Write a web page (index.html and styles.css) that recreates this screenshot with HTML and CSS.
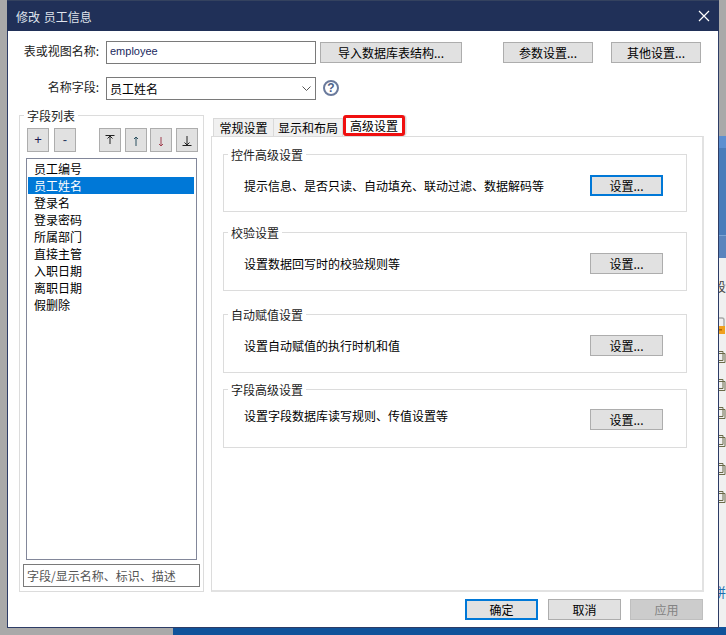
FILE: index.html
```html
<!DOCTYPE html>
<html lang="zh-CN">
<head>
<meta charset="utf-8">
<title>修改 员工信息</title>
<link rel="stylesheet" href="styles.css">
</head>
<body>
<div class="desk-bottom"></div>
<aside class="desk-right">
  <div class="desk-gray"></div>
  <div class="desk-blue"><div class="desk-blue-top"></div><div class="desk-blue-mid"></div><div class="desk-blue-low"></div></div>
  <div class="desk-list">
    <div class="clip-text">段</div>
    <svg class="lock" width="7" height="20" viewBox="0 0 7 20"><path d="M0 1h3a2 2 0 0 1 2 2v6" fill="none" stroke="#a8a8a8" stroke-width="1.4"/><rect x="0" y="9" width="6" height="8" fill="#f0a020"/><rect x="0" y="12" width="3" height="1.5" fill="#b06a00"/></svg>
    <svg class="doc" width="7" height="12" viewBox="0 0 7 12"><path d="M0 .5h4v2h2v9H0M0 2.500h4v7H0" fill="none" stroke="#6b6b4a"/></svg>
    <svg class="doc" width="7" height="12" viewBox="0 0 7 12"><path d="M0 .5h4v2h2v9H0M0 2.500h4v7H0" fill="none" stroke="#6b6b4a"/></svg>
    <svg class="doc" width="7" height="12" viewBox="0 0 7 12"><path d="M0 .5h4v2h2v9H0M0 2.500h4v7H0" fill="none" stroke="#6b6b4a"/></svg>
    <svg class="doc" width="7" height="12" viewBox="0 0 7 12"><path d="M0 .5h4v2h2v9H0M0 2.500h4v7H0" fill="none" stroke="#6b6b4a"/></svg>
    <svg class="doc" width="7" height="12" viewBox="0 0 7 12"><path d="M0 .5h4v2h2v9H0M0 2.500h4v7H0" fill="none" stroke="#6b6b4a"/></svg>
    <svg class="doc" width="7" height="12" viewBox="0 0 7 12"><path d="M0 .5h4v2h2v9H0M0 2.500h4v7H0" fill="none" stroke="#6b6b4a"/></svg>
    <div class="clip-text clip-blue">拼</div>
  </div>
</aside>

<main class="window">
  <header class="titlebar">
    <span class="title">修改 员工信息</span>
    <svg class="close" width="12" height="12" viewBox="0 0 12 12"><path d="M1 1l10 10M11 1L1 11" stroke="#fff" stroke-width="1.2" fill="none"/></svg>
  </header>

  <div class="form-row row-one">
    <label class="form-label">表或视图名称:</label>
    <input class="field" type="text" value="employee">
    <button class="btn btn-import">导入数据库表结构...</button>
    <button class="btn btn-param">参数设置...</button>
    <button class="btn btn-other">其他设置...</button>
  </div>

  <div class="form-row row-two">
    <label class="form-label">名称字段:</label>
    <div class="select">
      <span>员工姓名</span>
      <svg width="9" height="6" viewBox="0 0 9 6"><path d="M.5.500l4 4 4-4" fill="none" stroke="#555"/></svg>
    </div>
    <span class="help">?</span>
  </div>

  <div class="columns">
    <section class="field-group">
      <div class="legend">字段列表</div>
      <div class="toolbar">
        <button class="tool tool-plus">+</button>
        <button class="tool tool-minus">-</button>
        <div class="tool-spacer"></div>
        <div class="tool-pair">
          <button class="tool"><svg width="12" height="12" viewBox="0 0 12 12"><path d="M1.500 1.500h9M6 2v8M3.500 4.500L6 2l2.500 2.500" fill="none" stroke="#222"/></svg></button>
          <button class="tool"><svg width="12" height="12" viewBox="0 0 12 12"><path d="M6 3v9M4 5l2-2 2 2" fill="none" stroke="#2a5060"/></svg></button>
        </div>
        <div class="tool-pair">
          <button class="tool"><svg width="12" height="12" viewBox="0 0 12 12"><path d="M6 3v9M4 10l2 2 2-2" fill="none" stroke="#a04050"/></svg></button>
          <button class="tool"><svg width="12" height="12" viewBox="0 0 12 12"><path d="M1.500 11.500h9M6 2v9M3.500 8.500L6 11l2.500-2.500" fill="none" stroke="#222"/></svg></button>
        </div>
      </div>
      <ul class="field-list">
        <li>员工编号</li>
        <li class="selected">员工姓名</li>
        <li>登录名</li>
        <li>登录密码</li>
        <li>所属部门</li>
        <li>直接主管</li>
        <li>入职日期</li>
        <li>离职日期</li>
        <li>假删除</li>
      </ul>
      <input class="search" type="text" placeholder="字段/显示名称、标识、描述">
    </section>

    <section class="tabs">
      <nav class="tab-strip">
        <div class="tab tab-first">常规设置</div>
        <div class="tab">显示和布局</div>
        <div class="tab tab-active">高级设置</div>
      </nav>
      <div class="panel">
        <div class="option opt-a">
          <div class="legend">控件高级设置</div>
          <div class="option-row"><span>提示信息、是否只读、自动填充、联动过滤、数据解码等</span><button class="btn btn-set btn-focus">设置...</button></div>
        </div>
        <div class="option opt-b">
          <div class="legend">校验设置</div>
          <div class="option-row"><span>设置数据回写时的校验规则等</span><button class="btn btn-set">设置...</button></div>
        </div>
        <div class="option opt-c">
          <div class="legend">自动赋值设置</div>
          <div class="option-row"><span>设置自动赋值的执行时机和值</span><button class="btn btn-set">设置...</button></div>
        </div>
        <div class="option opt-d">
          <div class="legend">字段高级设置</div>
          <div class="option-row row-last"><span class="raised">设置字段数据库读写规则、传值设置等</span><button class="btn btn-set">设置...</button></div>
        </div>
      </div>
    </section>
  </div>

  <footer class="footer">
    <button class="btn btn-foot btn-focus">确定</button>
    <button class="btn btn-foot">取消</button>
    <button class="btn btn-foot btn-disabled">应用</button>
  </footer>
</main>
</body>
</html>
```

FILE: styles.css
```css
* { box-sizing: border-box; }
html, body { margin: 0; padding: 0; overflow: hidden; }
body {
  position: relative;
  width: 726px;
  height: 635px;
  background: #a9a9a9;
  font-family: "Noto Sans CJK SC", "Liberation Sans", sans-serif;
  font-size: 12px;
  line-height: 17px;
  color: #000;
}
ul { list-style: none; margin: 0; padding: 0; }

/* desktop behind the dialog */
.desk-bottom {
  position: absolute;
  left: 173px; top: 627px;
  width: 553px; height: 8px;
  background: #10529a;
}
.desk-right {
  position: absolute;
  left: 719px; top: 0;
  width: 7px; height: 627px;
  display: flex;
  flex-direction: column;
  overflow: hidden;
}
.desk-gray { height: 136px; flex: none; }
.desk-blue { height: 122px; flex: none; display: flex; flex-direction: column; }
.desk-blue-top { height: 12px; background: #5d8fd0; }
.desk-blue-mid { height: 88px; background: #4a7cba; border-bottom: 1px solid #7ba3d3; }
.desk-blue-low { height: 22px; background: #5a84bd; }
.desk-list {
  flex: 1;
  background: #f0f0f0;
  display: flex;
  flex-direction: column;
  align-items: flex-start;
}
.clip-text {
  margin-left: -6px;
  margin-top: 19px;
  width: 13px;
  font-size: 13px;
  line-height: 18px;
  color: #444;
}
.clip-blue { margin-top: 80px; color: #1c6fb0; }
.lock { margin-top: 22px; }
.doc { margin-top: 16px; }
.lock + .doc { margin-top: 14px; }

/* dialog */
.window {
  position: absolute;
  left: 7px; top: 0;
  width: 712px; height: 628px;
  background: #fff;
  border: 1px solid #2d3c66;
  border-top: 1px solid #34425f;
}
.titlebar {
  height: 30px;
  background: #203058;
  display: flex;
  align-items: center;
  justify-content: space-between;
  padding: 0 9px;
  margin: 0 -1px;
}
.title { color: #dfe3ec; word-spacing: 1px; }

.form-row { display: flex; align-items: flex-start; }
.row-one { margin-top: 10px; height: 23px; }
.row-two { margin-top: 13px; height: 23px; }
.form-label {
  width: 91px;
  margin-right: 7px;
  text-align: right;
  line-height: 20px;
  color: #222;
}
.field {
  width: 210px;
  height: 23px;
  border: 1px solid #7a7a7a;
  padding: 0 3px 3px;
  font-family: "Liberation Sans", sans-serif;
  font-size: 11px;
  color: #1a2a60;
  background: #fff;
  outline: none;
}
.btn {
  height: 21px;
  margin-top: 1px;
  padding: 0;
  border: 1px solid #adadad;
  background: #e1e1e1;
  font: inherit;
  line-height: 17px;
  color: #000;
}
.btn-import { width: 142px; margin-left: 4px; }
.btn-param { width: 90px; margin-left: 41px; }
.btn-other { width: 90px; margin-left: 18px; }
.btn-focus { border: 2px solid #0078d7; }

.select {
  width: 210px;
  height: 23px;
  border: 1px solid #7a7a7a;
  display: flex;
  align-items: center;
  justify-content: space-between;
  padding: 0 4px 0 3px;
}
.help {
  width: 16px;
  height: 16px;
  margin: 3px 0 0 7px;
  border: 2px solid #6a7a9c;
  border-radius: 50%;
  color: #4d6088;
  font-family: "Liberation Sans", sans-serif;
  font-size: 12px;
  font-weight: bold;
  line-height: 12px;
  text-align: center;
}

.columns { display: flex; align-items: flex-start; margin-top: 15px; padding-left: 11px; }

.legend {
  display: table;
  margin-top: -9px;
  margin-left: 4px;
  padding: 0 3px;
  background: #fff;
  color: #222;
}

/* left column */
.field-group {
  width: 185px;
  height: 477px;
  border: 1px solid #dcdcdc;
}
.toolbar { display: flex; gap: 3px; margin: 4px 0 0 7px; }
.tool-pair { display: flex; gap: 4px; }
.tool {
  width: 22px;
  height: 24px;
  padding: 0;
  border: 1px solid #adadad;
  background: #e1e1e1;
  display: flex;
  align-items: center;
  justify-content: center;
  font: inherit;
  font-family: "Liberation Sans", sans-serif;
  font-size: 13px;
  line-height: 20px;
}
.tool-plus { color: #1a1a50; margin-right: 2px; }
.tool-minus { color: #2a3a60; }
.tool-spacer { width: 17px; }
.field-list {
  width: 171px;
  height: 402px;
  margin: 6px 0 0 6px;
  padding: 1px 2px 0 1px;
  border: 1px solid #82879a;
}
.field-list li { height: 17px; padding-left: 6px; }
.field-list .selected { background: #0078d7; color: #fff; }
.search {
  display: block;
  width: 177px;
  height: 23px;
  margin: 4px 0 0 3px;
  padding: 0 3px 1px;
  border: 1px solid #7a7a7a;
  font: inherit;
  outline: none;
}
.search::placeholder { color: #555; opacity: 1; }

/* right column */
.tabs { width: 493px; margin-left: 7px; }
.tab-strip { height: 21px; display: flex; align-items: flex-end; padding-left: 2px; }
.tab {
  height: 18px;
  width: 70px;
  border: 1px solid #d9d9d9;
  border-bottom: 0;
  background: #f0f0f0;
  text-align: center;
  line-height: 18px;
}
.tab-first { width: 60px; border-right: 0; }
.tab-active {
  width: 62px;
  height: 21px;
  background: #fff;
  border: 3px solid #f01010;
  border-radius: 3px;
  line-height: 16px;
  box-shadow: 1.500px 0 0 #d9d9d9;
}
.panel {
  height: 456px;
  border: 1px solid #dcdcdc;
  border-right: 2px solid #e2e2e2;
  border-bottom: 2px solid #e2e2e2;
  padding: 17px 0 0 11px;
}
.option { width: 464px; border: 1px solid #dcdcdc; }
.opt-a { height: 58px; }
.opt-b { height: 59px; margin-top: 20px; }
.opt-c { height: 59px; margin-top: 23px; }
.opt-d { height: 59px; margin-top: 16px; }
.option .legend { margin-top: -9px; margin-left: 4px; }
.option-row {
  display: flex;
  align-items: center;
  justify-content: space-between;
  margin-top: 12px;
  padding: 0 23px 0 20px;
}
.row-last { margin-top: 11px; }
.raised { margin-top: -9px; }
.btn-set { width: 73px; margin-top: 0; }

/* footer */
.footer { display: flex; margin-top: 7px; padding-left: 457px; }
.btn-foot { width: 73px; margin-top: 0; margin-right: 10px; }
.btn-foot + .btn-foot + .btn-foot { margin-left: -1px; }
.btn-disabled { background: #ccc; border-color: #bfbfbf; color: #838383; }
```
